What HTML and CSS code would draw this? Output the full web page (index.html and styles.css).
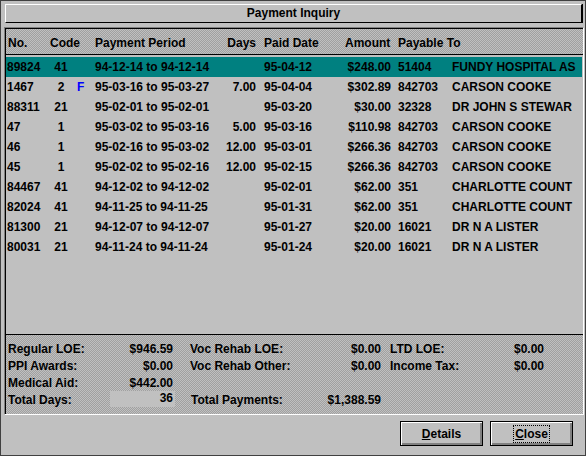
FILE: index.html
```html
<!DOCTYPE html>
<html>
<head>
<meta charset="utf-8">
<link rel="stylesheet" href="styles.css">
</head>
<body>
<div class="window">
  <div class="title">Payment Inquiry</div>
  <div class="panel">
    <div class="panel-inner">
      <div class="row head">
        <div class="c-no">No.</div>
        <div class="c-code h-code">Code</div>
        <div class="c-f"></div>
        <div class="c-period">Payment Period</div>
        <div class="c-days">Days</div>
        <div class="c-paid">Paid Date</div>
        <div class="c-amt h-amt">Amount</div>
        <div class="c-pid h-pay">Payable To</div>
      </div>
      <div class="list">
        <div class="row sel"><div class="c-no">89824</div><div class="c-code">41</div><div class="c-f"></div><div class="c-period">94-12-14 to 94-12-14</div><div class="c-days"></div><div class="c-paid">95-04-12</div><div class="c-amt">$248.00</div><div class="c-pid">51404</div><div class="c-name">FUNDY HOSPITAL AS</div></div>
        <div class="row"><div class="c-no">1467</div><div class="c-code">2</div><div class="c-f flag">F</div><div class="c-period">95-03-16 to 95-03-27</div><div class="c-days">7.00</div><div class="c-paid">95-04-04</div><div class="c-amt">$302.89</div><div class="c-pid">842703</div><div class="c-name">CARSON COOKE</div></div>
        <div class="row"><div class="c-no">88311</div><div class="c-code">21</div><div class="c-f"></div><div class="c-period">95-02-01 to 95-02-01</div><div class="c-days"></div><div class="c-paid">95-03-20</div><div class="c-amt">$30.00</div><div class="c-pid">32328</div><div class="c-name">DR JOHN S STEWAR</div></div>
        <div class="row"><div class="c-no">47</div><div class="c-code">1</div><div class="c-f"></div><div class="c-period">95-03-02 to 95-03-16</div><div class="c-days">5.00</div><div class="c-paid">95-03-16</div><div class="c-amt">$110.98</div><div class="c-pid">842703</div><div class="c-name">CARSON COOKE</div></div>
        <div class="row"><div class="c-no">46</div><div class="c-code">1</div><div class="c-f"></div><div class="c-period">95-02-16 to 95-03-02</div><div class="c-days">12.00</div><div class="c-paid">95-03-01</div><div class="c-amt">$266.36</div><div class="c-pid">842703</div><div class="c-name">CARSON COOKE</div></div>
        <div class="row"><div class="c-no">45</div><div class="c-code">1</div><div class="c-f"></div><div class="c-period">95-02-02 to 95-02-16</div><div class="c-days">12.00</div><div class="c-paid">95-02-15</div><div class="c-amt">$266.36</div><div class="c-pid">842703</div><div class="c-name">CARSON COOKE</div></div>
        <div class="row"><div class="c-no">84467</div><div class="c-code">41</div><div class="c-f"></div><div class="c-period">94-12-02 to 94-12-02</div><div class="c-days"></div><div class="c-paid">95-02-01</div><div class="c-amt">$62.00</div><div class="c-pid">351</div><div class="c-name">CHARLOTTE COUNT</div></div>
        <div class="row"><div class="c-no">82024</div><div class="c-code">41</div><div class="c-f"></div><div class="c-period">94-11-25 to 94-11-25</div><div class="c-days"></div><div class="c-paid">95-01-31</div><div class="c-amt">$62.00</div><div class="c-pid">351</div><div class="c-name">CHARLOTTE COUNT</div></div>
        <div class="row"><div class="c-no">81300</div><div class="c-code">21</div><div class="c-f"></div><div class="c-period">94-12-07 to 94-12-07</div><div class="c-days"></div><div class="c-paid">95-01-27</div><div class="c-amt">$20.00</div><div class="c-pid">16021</div><div class="c-name">DR N A LISTER</div></div>
        <div class="row"><div class="c-no">80031</div><div class="c-code">21</div><div class="c-f"></div><div class="c-period">94-11-24 to 94-11-24</div><div class="c-days"></div><div class="c-paid">95-01-24</div><div class="c-amt">$20.00</div><div class="c-pid">16021</div><div class="c-name">DR N A LISTER</div></div>
      </div>
      <div class="summary">
        <div>Regular LOE:</div><div class="val">$946.59</div><div class="lab2">Voc Rehab LOE:</div><div class="val">$0.00</div><div class="lab3">LTD LOE:</div><div class="val">$0.00</div>
        <div>PPI Awards:</div><div class="val">$0.00</div><div class="lab2">Voc Rehab Other:</div><div class="val">$0.00</div><div class="lab3">Income Tax:</div><div class="val">$0.00</div>
        <div>Medical Aid:</div><div class="val">$442.00</div><div class="lab2"></div><div class="val"></div><div class="lab3"></div><div class="val"></div>
        <div>Total Days:</div><div class="val"><span class="daysbox">36</span></div><div class="lab2 tp">Total Payments:</div><div class="val">$1,388.59</div><div class="lab3"></div><div class="val"></div>
      </div>
    </div>
  </div>
  <div class="buttons">
    <button class="btn"><u>D</u>etails</button>
    <button class="btn"><span class="focus"><u>C</u>lose</span></button>
  </div>
</div>
</body>
</html>
```
FILE: styles.css
```css
* { box-sizing: border-box; }
body {
  margin: 0;
  background: #c0c0c0;
  font: bold 12px "Liberation Sans", Arial, sans-serif;
  color: #000;
}
.window {
  width: 586px;
  height: 456px;
  border: 1px solid #404040;
  padding: 3px 1px 0 3px;
  background: #c0c0c0;
}
.title {
  margin: 0 2px 4px 1px;
  height: 19px;
  border: 1px solid;
  border-color: #fff #000 #000 #fff;
  box-shadow: 1px 0 0 #000;
  text-align: center;
  line-height: 17px;
}
.panel {
  height: 388px;
  border-style: solid;
  border-width: 1px;
  border-color: #808080 #fff #fff #808080;
}
.panel-inner {
  height: 100%;
  border-top: 1px solid #000;
  border-left: 1px solid #000;
}
.head, .summary {
  background: repeating-conic-gradient(#c0c0c0 0 25%, #a0a0a0 0 50%) 0 0 / 2px 2px;
}
.row {
  display: grid;
  grid-template-columns: 43px 22px 23px 125px 36px 89px 46px 61px 127px 1fr;
  padding-left: 1px;
  height: 20px;
  line-height: 20px;
  white-space: nowrap;
}
.head {
  height: 26px;
  padding-top: 7px;
  line-height: 14px;
  border-bottom: 1px solid #000;
}
.head .c-no { padding-left: 1px; }
.h-code { text-align: left !important; }
.h-amt { padding-right: 3px; }
.h-pay { grid-column: span 2; }
.list {
  height: 279px;
  padding-top: 2px;
}
.row.sel {
  background: #008080;
  margin-right: 1px;
}
.c-code { text-align: center; }
.c-f { padding-left: 5px; }
.flag { color: #0000ff; }
.c-days { text-align: right; }
.c-paid { padding-left: 8px; }
.c-amt { text-align: right; }
.c-pid { padding-left: 7px; }
.summary {
  height: 80px;
  border-top: 1px solid #000;
  padding: 6px 0 0 2px;
  display: grid;
  grid-template-columns: 102px 65px 133px 73px 89px 74px;
  grid-auto-rows: 17px;
  line-height: 17px;
  white-space: nowrap;
}
.val { text-align: right; padding-right: 2px; }
.lab2 { padding-left: 15px; }
.lab2.tp { padding-left: 16px; }
.lab3 { padding-left: 9px; }
.summary .val:nth-child(6n) { padding-right: 0; }
.summary .val:nth-child(6n+4) { padding-right: 0; }
.daysbox {
  display: block;
  margin: -1px -2px 0 0;
  height: 16px;
  line-height: 14px;
  padding-right: 2px;
  background: #c0c0c0;
}
.buttons {
  display: flex;
  justify-content: flex-end;
  gap: 7px;
  margin-top: 6px;
  padding-right: 11px;
}
.btn {
  width: 83px;
  height: 25px;
  padding: 0;
  margin: 0;
  font: bold 12px "Liberation Sans", Arial, sans-serif;
  color: #000;
  background: #c0c0c0;
  border: 1px solid #000;
  box-shadow: inset 1px 1px 0 #fff, inset -1px -1px 0 #808080, inset -2px -2px 0 #808080;
  display: flex;
  align-items: center;
  justify-content: center;
}
.focus {
  outline: 1px dotted #000;
  padding: 1px 1px;
  line-height: 14px;
}
```
